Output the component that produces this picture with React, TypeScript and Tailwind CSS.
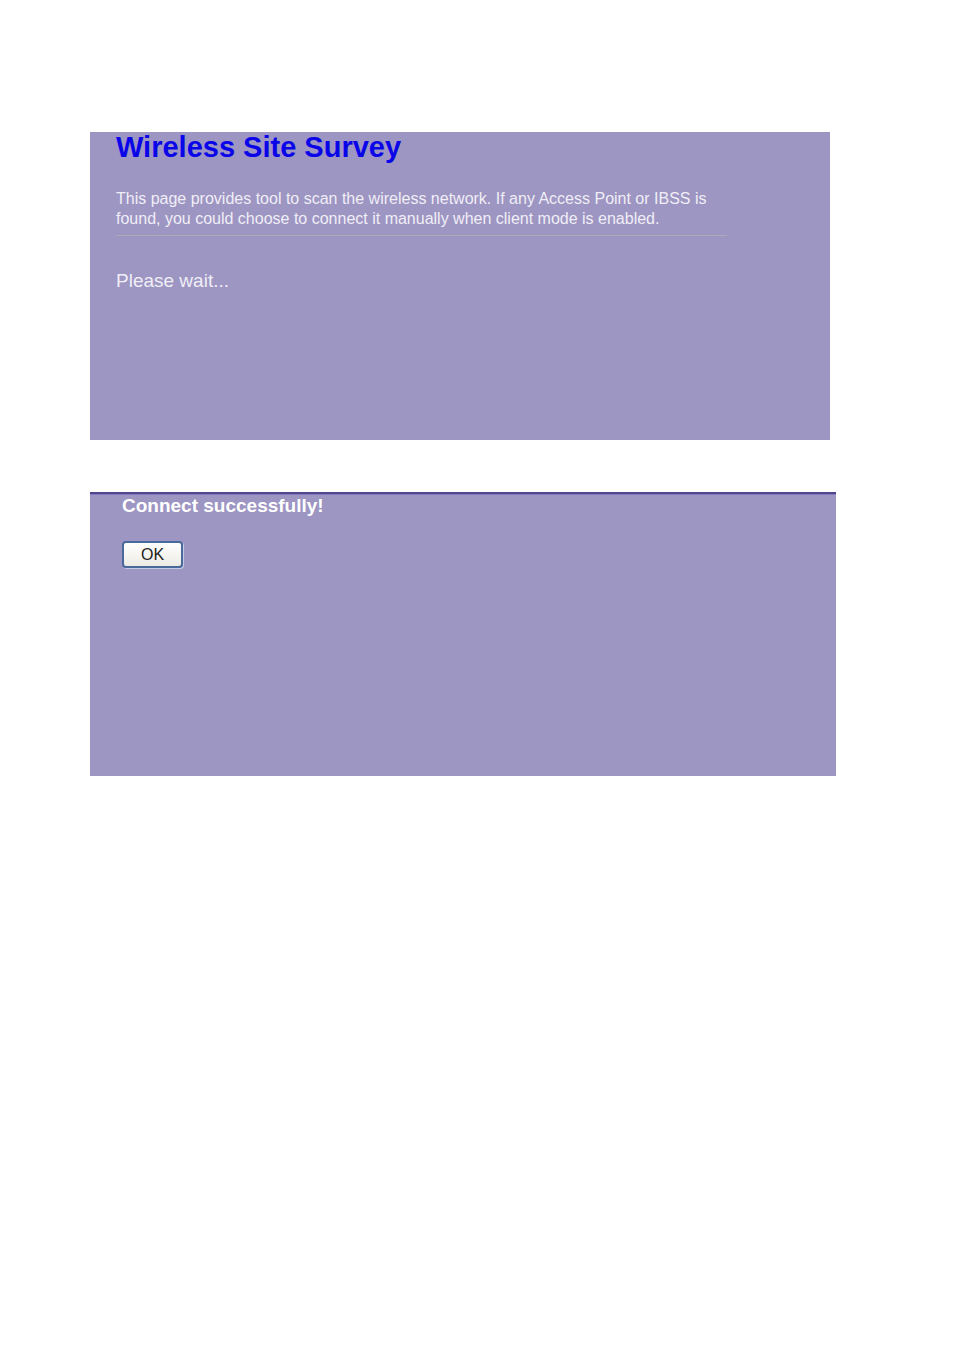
function SiteSurvey() {
  return (
    <section className="mr-[6px] min-h-[308px] bg-[#9d95c2] pr-[103px] pb-8 pl-[26px]">
      <h1 className="text-[29px] leading-[30px] font-bold text-[#0a05e8]">
        Wireless Site Survey
      </h1>
      <p className="mt-[27px] text-[16px] leading-5 text-[#f0eef6]">
        This page provides tool to scan the wireless network. If any Access
        Point or IBSS is found, you could choose to connect it manually when
        client mode is enabled.
      </p>
      <hr className="mt-[6px] border-t border-[#aea7b6]" />
      <p className="mt-8 text-[19px] leading-[26px] text-[#f0eef6]">
        Please wait...
      </p>
    </section>
  );
}

function ConnectResult() {
  return (
    <section className="min-h-[284px] border-t-2 border-[#50468c] bg-[#9d95c2] px-8 pb-8 shadow-[inset_0_1px_0_#8479bd]">
      <h2 className="text-[19px] leading-6 font-bold text-white">
        Connect successfully!
      </h2>
      <button
        type="button"
        className="mt-[23px] h-[27px] w-[61px] rounded-[4px] border-2 border-[#48699a] bg-linear-to-b from-white to-[#ecebe4] text-[16px] leading-5 text-[#222222] shadow-[1px_1px_0_#c3cbe6]"
      >
        OK
      </button>
    </section>
  );
}

export default function App() {
  return (
    <main className="flex min-h-screen flex-col gap-[52px] bg-white pt-[132px] pr-[118px] pb-12 pl-[90px] font-['Liberation_Sans',Arial,sans-serif]">
      <SiteSurvey />
      <ConnectResult />
    </main>
  );
}
